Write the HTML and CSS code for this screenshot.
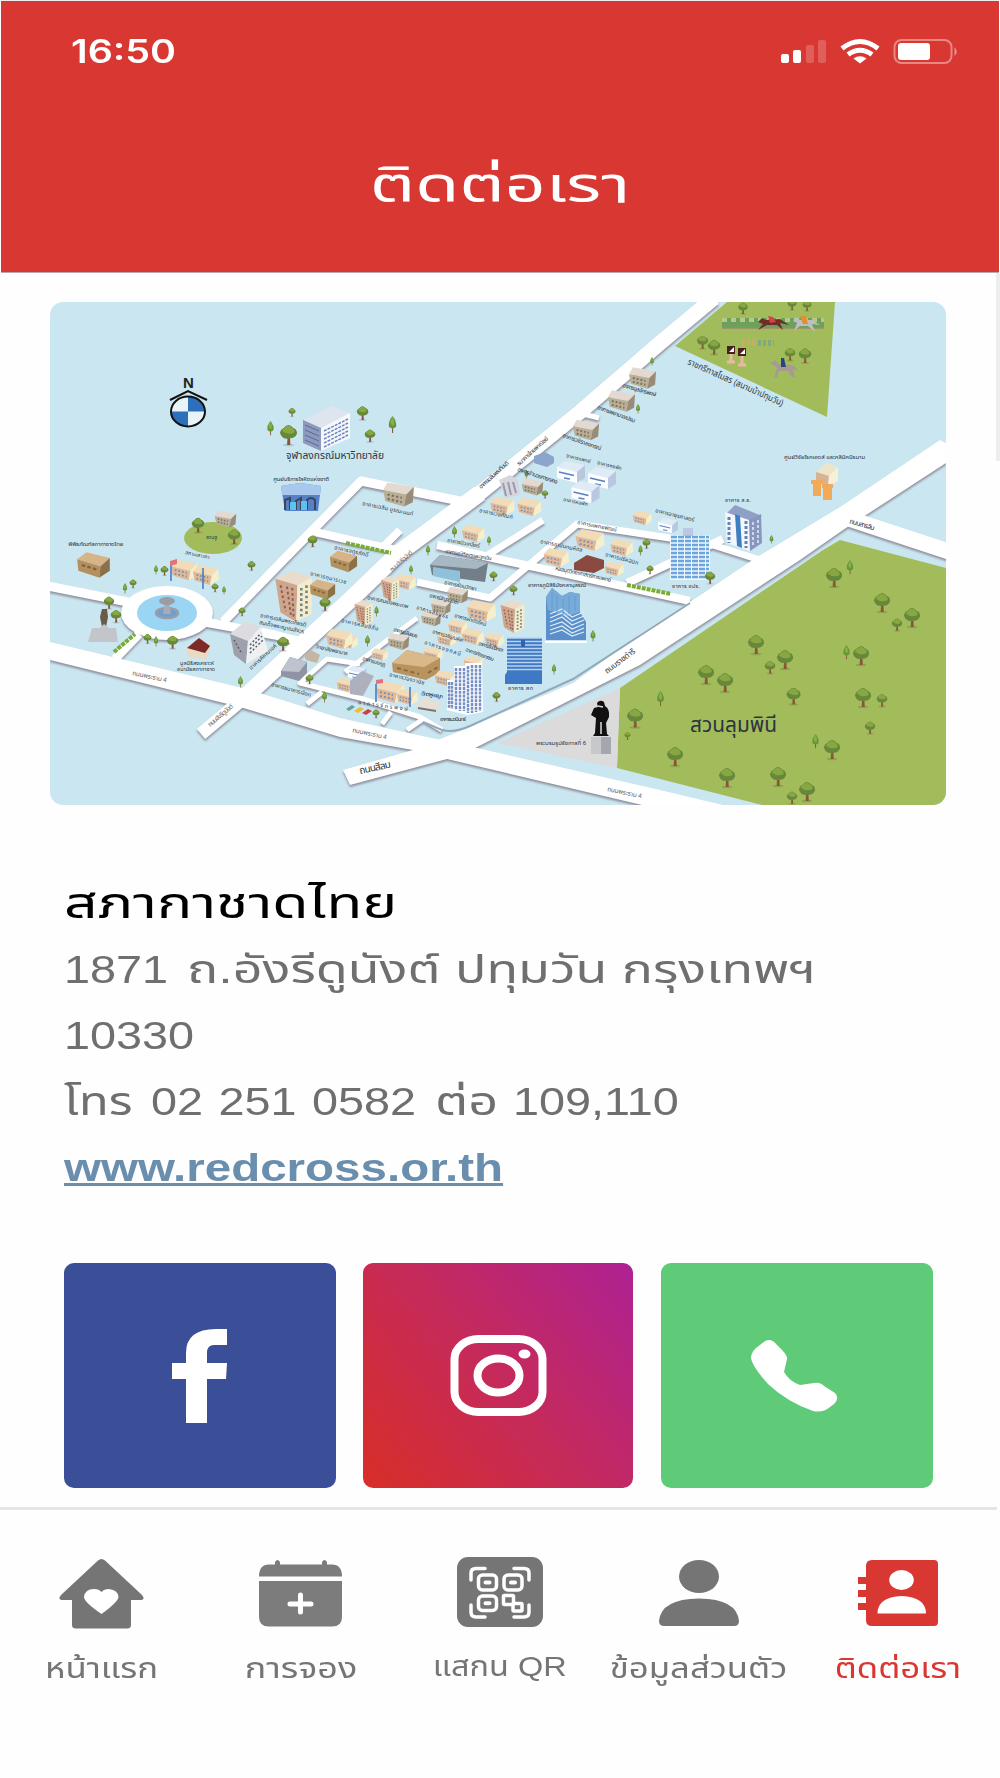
FILE: index.html
```html
<!DOCTYPE html>
<html lang="th">
<head>
  <meta charset="UTF-8">
  <meta name="viewport" content="width=device-width, initial-scale=1.0">
  <title>ติดต่อเรา</title>
  <link rel="stylesheet" href="styles.css">
</head>
<body>
  <header class="header">
    <div class="status-bar">
      <span class="time">16:50</span>
      <svg class="status-icons" width="178" height="28" viewBox="781 38 178 28">
        <g fill="#fff">
          <rect x="781" y="54" width="8" height="9" rx="2"/>
          <rect x="793" y="50" width="8" height="13" rx="2"/>
          <rect x="806" y="45" width="8" height="18" rx="2" opacity=".2"/>
          <rect x="818" y="40" width="8" height="23" rx="2" opacity=".2"/>
          <path d="M853.500 58.500Q860 54 866.500 58.500L860 63.500Z"/>
          <rect x="898" y="43" width="32" height="17" rx="3"/>
          <path d="M954.500 47Q959 51.500 954.500 56Z" opacity=".45"/>
        </g>
        <path d="M842 48.500Q860 34.500 878 48.500M848 54.500Q860 46 872 54.500" fill="none" stroke="#fff" stroke-width="5"/>
        <rect x="894.500" y="40" width="57" height="23" rx="7" fill="none" stroke="#fff" stroke-width="2" opacity=".4"/>
      </svg>
    </div>
    <h1 class="title"><span>ติดต่อเรา</span></h1>
  </header>

  <main class="content">
    <svg class="map" width="896" height="503" viewBox="50 302 896 503">
      <defs>
        <symbol id="tree" viewBox="0 0 20 24">
          <ellipse cx="10" cy="22" rx="6" ry="1.500" fill="#000" opacity=".12"/>
          <path d="M9 13h2.500l.5 9h-3.500z" fill="#8a5636"/>
          <path d="M1 9Q2 5 5 4Q10-2 15 4Q19 5 19 10Q17 15 12 15Q3 17 1 9Z" fill="#67883a"/>
          <path d="M3 7Q5 4 7 3Q10 0 14 4Q17 6 16 9Q9 12 3 7Z" fill="#87a743"/>
        </symbol>
        <symbol id="pine" viewBox="0 0 10 20">
          <path d="M4.500 13h1.200v6h-1.200z" fill="#8a5636"/>
          <path d="M5 0Q10 6 9 12Q5 16 1 12Q0 6 5 0Z" fill="#66943a"/>
          <path d="M5 1Q8 6 6 11Q2 10 3 5Z" fill="#86b048"/>
        </symbol>
        <symbol id="tan" viewBox="0 0 30 24">
          <path d="M1 8L7 1L29 5L22 13Z" fill="#f2dcb8"/>
          <path d="M1 8L22 13L20 23L3 18Z" fill="#e2b996"/>
          <path d="M22 13L29 5L30 17L20 23Z" fill="#f6efcb"/>
          <path d="M5 12l13 3M5 16l13 3" stroke="#7f91b5" stroke-width="2" stroke-dasharray="2 2"/>
        </symbol>
        <symbol id="taupe" viewBox="0 0 30 24">
          <path d="M1 8L5 1L29 5L22 12Z" fill="#e4d9d0"/>
          <path d="M1 8L22 12L20 23L3 18Z" fill="#b9ae96"/>
          <path d="M22 12L29 5L28 19L20 23Z" fill="#988c78"/>
          <path d="M5 12l13 3M5 16l13 3" stroke="#7b715f" stroke-width="2" stroke-dasharray="2 2"/>
        </symbol>
        <symbol id="brown" viewBox="0 0 30 24">
          <path d="M1 7L9 1L29 6L21 13Z" fill="#d6b488"/>
          <path d="M1 7L21 13L20 23L2 17Z" fill="#b3905f"/>
          <path d="M21 13L29 6L29 17L20 23Z" fill="#8c7047"/>
          <path d="M5 12l13 4" stroke="#846337" stroke-width="2" stroke-dasharray="3 2"/>
        </symbol>
        <symbol id="white" viewBox="0 0 30 24">
          <path d="M1 7L9 1L29 5L21 12Z" fill="#dfebf5"/>
          <path d="M1 7L21 12L21 23L1 18Z" fill="#fbfdff"/>
          <path d="M21 12L29 5L29 18L21 23Z" fill="#b9c8df"/>
          <path d="M3 12l15 3.500M8 18l6 1" stroke="#5b7fc0" stroke-width="1.500"/>
        </symbol>
        <symbol id="block" viewBox="0 0 30 40">
          <path d="M1 6L14 0L29 5L18 11Z" fill="#eadcc8"/>
          <path d="M1 6L18 11L17 39L5 32Z" fill="#cfa58c"/>
          <path d="M18 11L29 5L29 33L17 39Z" fill="#f5eccb"/>
          <path d="M5 11l4 20M10 12l3 22M14 13l1 22" stroke="#8b5f53" stroke-width="1.500" stroke-dasharray="2 2"/>
          <path d="M21 13v22M25 11v22" stroke="#71868a" stroke-width="2" stroke-dasharray="2 2"/>
        </symbol>
      </defs>

      <rect x="50" y="302" width="896" height="503" fill="#cae6f0"/>

      <!-- parks -->
      <g fill="#a2bc5c">
        <path d="M840 540L946 568V805H762L617 768L620 688L823 550Z"/>
        <path d="M727 302H835L827 417L675 346Z"/>
        <ellipse cx="213" cy="538" rx="29" ry="16"/>
      </g>
      <path d="M497 743L620 688L617 768Z" fill="#dbdbdb"/>

      <!-- roads -->
      <g class="roads">
        <path class="area" d="M50 642L247 689L340 718L473 747L660 790L723 805H642L447 759L413 750L340 737L240 707L50 660Z"/>
        <path class="area" d="M343 770L413 750L455 733L573 683L640 634L702 594L757 557L840 507L940 440L946 443V463L843 530L800 560L640 665L477 747L447 759L350 785Z"/>
        <path stroke-width="13" d="M201 734L250 693"/>
        <path stroke-width="17" d="M247 695L350 600L400 552L480 493"/>
        <path stroke-width="15" d="M475 497L580 412L660 343L714 298"/>
        <path stroke-width="16" d="M850 519L950 552"/>
        <path stroke-width="9" d="M48 586L128 602M205 622L275 635L310 644M139 634L115 659M223 622L293 550L361 481L465 502"/>
        <path stroke-width="8" d="M315 532L350 540L410 553M400 530L383 547M437 545L493 558L627 587L690 601M723 539L627 583"/>
        <path stroke-width="7" d="M543 520L488 555M760 560L710 544L577 524L490 598L417 582"/>
        <path stroke-width="5" d="M417 618L345 672M360 664L327 659L300 683L360 698L420 717L442 730M322 692L307 704M391 712L382 724M423 719L407 730M583 414L599 418"/>
        <ellipse class="area" cx="167" cy="613" rx="46" ry="27"/>
      </g>
      <path d="M423 722L442 730Q455 733 470 726L573 679L690 603" fill="none" stroke="#91a9ba" stroke-width="2"/>

      <!-- fountain -->
      <ellipse cx="167" cy="613" rx="30" ry="18" fill="#9bd5f4"/>
      <ellipse cx="167" cy="613" rx="11" ry="5" fill="#6f9fd0" stroke="#9a9da6" stroke-width="2.500"/>
      <path d="M165 602h4l2 12h-8z" fill="#a9abb3"/>
      <ellipse cx="167" cy="601" rx="8" ry="4" fill="#9a9da6"/>

      <!-- compass -->
      <text class="north" x="183" y="388">N</text>
      <path d="M170 400L188 391L207 400" fill="none" stroke="#111" stroke-width="2"/>
      <ellipse cx="188" cy="411.500" rx="17" ry="15" fill="#e8f4f8"/>
      <path d="M188 411.500V396.500A17 15 0 0 1 205 411.500ZM188 411.500V426.500A17 15 0 0 1 171 411.500Z" fill="#2c6fbb"/>
      <ellipse cx="188" cy="411.500" rx="17" ry="15" fill="none" stroke="#111" stroke-width="2"/>

      <!-- chulalongkorn -->
      <path d="M303 420L332 406L350 413L321 428Z" fill="#dfe5ee"/>
      <path d="M303 420L321 428V451L303 443Z" fill="#8d99bd"/>
      <path d="M321 428L350 413V438L321 451Z" fill="#f6f8fc"/>
      <path d="M324 431L348 419M324 435L348 423M324 439L348 427M324 443L348 431M324 447L348 435" stroke="#7189bd" stroke-width="1.500" stroke-dasharray="3 1"/>
      <path d="M305 425l14 6M305 430l14 6M305 435l14 6M305 440l14 6" stroke="#5a6c9c" stroke-width="1"/>

      <!-- blood centre -->
      <path d="M281 486L300 483L321 486L318 511H285Z" fill="#5681c9"/>
      <path d="M281 486L300 483L321 486L320 495H282Z" fill="#a9c8ee"/>
      <path d="M285 510V500l5-2v12M296 510v-9l5-3v12M307 510v-10q4-4 8 0v10" fill="none" stroke="#3a4758" stroke-width="2"/>
      <path d="M290 502h6v8h-6zM301 501h6v9h-6z" fill="#5fc2ee"/>

      <!-- race course -->
      <path d="M722 318H824V328H722Z" fill="#6ca05b"/>
      <path d="M722 320H824" stroke="#b4c98a" stroke-width="4" stroke-dasharray="5 4"/>
      <path d="M722 328H824" stroke="#9a8b6c" stroke-width="1.500"/>
      <path d="M742 342H757" stroke="#c6ae66" stroke-width="6" stroke-dasharray="3 2"/>
      <path d="M758 343H774" stroke="#7fa982" stroke-width="6" stroke-dasharray="3 2"/>
      <path d="M731 352v10M742 355v10M727 362h8M738 365h8" stroke="#ecb8a2" stroke-width="3"/>
      <path d="M727 346h8v8h-8zM738 348h8v8h-8z" fill="#4b1f1c"/>
      <path d="M729 352l5-5v5zM740 354l5-5v5z" fill="#fff"/>
      <path d="M758 322L762 318L766 320L780 319L789 325L780 323L783 330L777 325L767 325L758 330L763 324Z" fill="#6d2e25"/>
      <path d="M768 316l5 1 3 5-6 1z" fill="#d64242"/>
      <path d="M793 320L797 317L800 320L812 320L820 325L812 324L815 332L808 326L800 326L794 331L797 323Z" fill="#bcbfc2"/>
      <path d="M800 316l6 0 2 8-5 0z" fill="#e68b2f"/>
      <path d="M770 364L775 360L779 364L791 365L795 367L799 371L793 369L795 378L792 377L788 371L779 371L777 378L774 377L777 368L774 365Z" fill="#a59b94"/>
      <path d="M781 358h3l2 9h-5z" fill="#2b4478"/>

      <!-- research clinic -->
      <path d="M816 472L827 463L838 467L829 476Z" fill="#eee5c9"/>
      <path d="M816 472L829 476L828 486L816 482Z" fill="#d7b294"/>
      <path d="M829 476L838 467V481L828 486Z" fill="#f6f0d4"/>
      <path d="M811 480h12v4h-2v12h-8v-12h-2zM822 484h11v4h-1v12h-9v-12h-1z" fill="#f1a95a"/>

      <!-- museum, station, chapel -->
      <use href="#brown" x="76" y="548" width="35" height="34"/>
      <use href="#taupe" x="214" y="509" width="23" height="20"/>
      <use href="#tan" x="170" y="557" width="28" height="26"/>
      <use href="#tan" x="192" y="563" width="27" height="24"/>
      <path d="M171 561v20M203 568v21" stroke="#3c77c4" stroke-width="1.500"/>
      <path d="M170 561l7-2v5l-7 2z" fill="#e07278"/>
      <path d="M186 648L200 638L211 646L206 659L188 657Z" fill="#eadac2"/>
      <path d="M187 648L199 638L210 646L205 653Z" fill="#7d2b28"/>
      <path d="M102 609h5l1 8-2 10h-4l-2-10z" fill="#6a5d48"/>
      <path d="M88 642l4-14h8l4-4 5 4h7l2 14z" fill="#c3c5cb"/>

      <!-- city blocks -->
      <use href="#block" x="269" y="571" width="49" height="52"/>
      <use href="#brown" x="309" y="577" width="27" height="25"/>
      <use href="#brown" x="329" y="549" width="29" height="25"/>
      <path d="M230 634L245 621L261 627L248 641Z" fill="#dcdce0"/>
      <path d="M230 634L248 641L246 664L234 655Z" fill="#9ea0ac"/>
      <path d="M248 641L261 627L268 651L246 664Z" fill="#eff0f2"/>
      <path d="M250 645l11-12M250 649l12-13M250 653l13-13M234 640l8 14" stroke="#5b5f6b" stroke-width="1.500" stroke-dasharray="2 2"/>
      <use href="#taupe" x="382" y="481" width="33" height="27"/>
      <use href="#taupe" x="628" y="366" width="29" height="24"/>
      <use href="#taupe" x="607" y="389" width="29" height="24"/>
      <use href="#taupe" x="572" y="418" width="28" height="24"/>
      <path d="M534 456L545 452L554 457V463L547 467L534 463Z" fill="#8ba5cb"/>
      <use href="#white" x="554" y="460" width="34" height="24"/>
      <use href="#white" x="585" y="466" width="34" height="24"/>
      <use href="#white" x="568" y="480" width="35" height="24"/>
      <path d="M499 480L510 475L518 480L520 495L505 498Z" fill="#d7d6df"/>
      <path d="M503 483l3 13M508 482l3 13M513 482l3 11" stroke="#9a9bac" stroke-width="2"/>
      <use href="#taupe" x="521" y="477" width="23" height="20"/>
      <use href="#tan" x="489" y="496" width="26" height="20"/>
      <use href="#tan" x="516" y="497" width="26" height="20"/>
      <use href="#tan" x="459" y="524" width="28" height="19"/>
      <use href="#tan" x="572" y="528" width="35" height="24"/>
      <use href="#tan" x="607" y="538" width="29" height="19"/>
      <use href="#tan" x="540" y="547" width="32" height="21"/>
      <path d="M574 563L587 555L604 560V568L594 573L574 570Z" fill="#8a4a3f"/>
      <use href="#tan" x="604" y="558" width="20" height="22"/>
      <use href="#tan" x="632" y="507" width="20" height="22"/>
      <use href="#white" x="656" y="517" width="24" height="17"/>
      <path d="M430 565L440 555L488 563L485 582L432 575Z" fill="#727f89"/>
      <path d="M430 565L440 555L488 563L476 569Z" fill="#a7b8c2"/>
      <path d="M433 567l27 4v11l-27-6z" fill="#8fc1da"/>

      <use href="#tan" x="394" y="573" width="22" height="18"/>
      <use href="#block" x="377" y="576" width="26" height="26"/>
      <use href="#block" x="351" y="600" width="25" height="26"/>
      <use href="#taupe" x="446" y="586" width="23" height="18"/>
      <use href="#taupe" x="429" y="598" width="24" height="17"/>
      <use href="#taupe" x="419" y="610" width="24" height="17"/>
      <use href="#tan" x="463" y="599" width="36" height="24"/>
      <use href="#block" x="498" y="600" width="29" height="34"/>
      <use href="#tan" x="446" y="619" width="23" height="16"/>
      <use href="#tan" x="435" y="631" width="23" height="16"/>
      <use href="#tan" x="461" y="627" width="23" height="19"/>
      <use href="#tan" x="483" y="632" width="22" height="16"/>
      <use href="#taupe" x="387" y="632" width="23" height="19"/>
      <use href="#tan" x="338" y="632" width="20" height="19"/>
      <use href="#tan" x="320" y="628" width="38" height="22"/>
      <use href="#tan" x="371" y="647" width="17" height="15"/>
      <use href="#tan" x="421" y="646" width="24" height="16"/>
      <path d="M392 663L407 650L440 658V672L426 680L393 672Z" fill="#b8935f"/>
      <path d="M392 663L407 650L440 658L424 667Z" fill="#dab988"/>
      <path d="M397 668l22 6M428 673l10-6" stroke="#8b693a" stroke-width="2" stroke-dasharray="4 3"/>
      <use href="#tan" x="461" y="655" width="24" height="16"/>
      <use href="#tan" x="434" y="669" width="22" height="19"/>

      <path d="M281 671L290 657L307 662L307 673L299 681L281 676Z" fill="#8f93a5"/>
      <path d="M281 671L290 657L307 662L299 672Z" fill="#bfc3cf"/>
      <path d="M304 655L311 650L320 655L317 663L306 660Z" fill="#c5b6a4"/>
      <use href="#white" x="346" y="665" width="22" height="16"/>
      <use href="#tan" x="335" y="677" width="22" height="16"/>
      <path d="M350 681L362 671L374 676L363 696L350 694Z" fill="#aeb1bd"/>
      <use href="#tan" x="375" y="680" width="30" height="24"/>
      <use href="#tan" x="396" y="686" width="22" height="22"/>
      <path d="M376 684v18M410 687v20" stroke="#3c77c4" stroke-width="1.500"/>
      <path d="M376 680l7-1v4l-7 1z" fill="#e07278"/>
      <path d="M416 705L424 697L440 703L437 713L418 709Z" fill="#e6dfd5"/>
      <path d="M418 708l18 3" stroke="#777" stroke-width="2"/>
      <path d="M354 711l6-4 4 2-6 4z" fill="#f0bd2c"/>
      <path d="M362 713l6-4 4 2-6 4z" fill="#c94343"/>
      <path d="M346 709l6-4 3 2-6 4z" fill="#6aa09a"/>

      <!-- towers -->
      <path d="M670 535h40v45h-40z" fill="#eef6fd"/>
      <path d="M683 528h10v8h-10z" fill="#bcc7e6"/>
      <path d="M671 537H709M671 541H709M671 545H709M671 549H709M671 553H709M671 557H709M671 561H709M671 565H709M671 569H709M671 573H709M671 577H709" stroke="#6aa5dc" stroke-width="2.500" stroke-dasharray="6 1"/>
      <path d="M725 515L735 505L762 516L749 521Z" fill="#8f9fc6"/>
      <path d="M725 512L749 520L750 551L727 543Z" fill="#f3f7fc"/>
      <path d="M749 520L761 514L762 543L750 551Z" fill="#8797bf"/>
      <path d="M735 514L740 516L742 548L737 546Z" fill="#3e7fc3"/>
      <path d="M729 517v26M746 521v27" stroke="#6082bc" stroke-width="3" stroke-dasharray="3 2"/>
      <path d="M753 522v24M758 520v23" stroke="#e9edf6" stroke-width="1.500" stroke-dasharray="3 2"/>
      <path d="M546 597L552 588L562 596L570 592L580 594V612L586 622V640H546Z" fill="#5b8fc9"/>
      <path d="M546 597L552 588L562 596L570 592L580 594V612L566 617L548 610Z" fill="#79abd9"/>
      <path d="M550 614L562 609L572 617L584 612M550 618L562 613L572 621L584 616M550 622L562 617L572 625L584 620M550 626L562 622L572 629L584 624M550 630L562 626L572 633L584 628M550 634L562 630L572 636L584 632" fill="none" stroke="#dcecf8" stroke-width="1.300"/>
      <path d="M552 592v20M557 595v18M563 599v17M569 596v18M575 596v15" stroke="#639ad0" stroke-width="1"/>
      <path d="M545 642h42" stroke="#fff" stroke-width="2"/>
      <path d="M507 638H542V684H505V675L507 672Z" fill="#3f78c4"/>
      <path d="M507 638h35M507 641.500h35M507 645h35M507 648.500h35M507 652h35M507 655.500h35M507 659h35M507 662.500h35M507 666h35M507 669.500h35" stroke="#b9d4ef" stroke-width="1.500"/>
      <path d="M521 640h4v7h-4z" fill="#2d63b2"/>
      <path d="M447 680h7v-14h11v-3h17l1 49-16 3-20-5z" fill="#fff"/>
      <path d="M449 682v26M452 682v27M456 668v42M460 668v43M464 668v43M468 666v47M472 665v48M476 665v47M480 665v46" stroke="#7790c4" stroke-width="2.500" stroke-dasharray="3 .8"/>

      <!-- monument -->
      <path d="M591 737h20v17h-20z" fill="#c6c8cc"/>
      <path d="M601 737h10v17h-10z" fill="#a4a7ad"/>
      <path d="M597 703q3-4 7-1l1 4q5 3 4 11l-3 6 1 11 2 2h-16l2-3 1-15-5-3 3-7 4-1z" fill="#111"/>
      <path d="M601 722v12M598 706l5 1" stroke="#dbdbdb" stroke-width="1.500"/>

      <!-- hedges -->
      <g stroke="#78ad35" stroke-width="4" stroke-dasharray="4 1">
        <path d="M346 543L391 553M627 585L671 594M114 652L135 634"/>
      </g>

      <!-- trees -->
      <use href="#tree" x="279" y="424" width="19" height="23"/>
      <use href="#pine" x="266" y="421" width="9" height="15"/>
      <use href="#tree" x="288" y="407" width="8" height="11"/>
      <use href="#tree" x="356" y="403" width="13" height="21"/>
      <use href="#pine" x="388" y="416" width="9" height="18"/>
      <use href="#tree" x="364" y="428" width="12" height="16"/>
      <use href="#tree" x="191" y="517" width="14" height="17"/>
      <use href="#tree" x="227" y="528" width="14" height="18"/>
      <use href="#tree" x="307" y="534" width="11" height="15"/>
      <use href="#tree" x="103" y="596" width="12" height="14"/>
      <use href="#tree" x="110" y="609" width="12" height="15"/>
      <use href="#pine" x="121" y="583" width="8" height="11"/>
      <use href="#tree" x="129" y="578" width="8" height="12"/>
      <use href="#pine" x="153" y="565" width="6" height="10"/>
      <use href="#tree" x="160" y="565" width="9" height="12"/>
      <use href="#tree" x="211" y="582" width="8" height="12"/>
      <use href="#pine" x="221" y="586" width="6" height="9"/>
      <use href="#tree" x="247" y="560" width="9" height="12"/>
      <use href="#tree" x="238" y="606" width="8" height="12"/>
      <use href="#tree" x="143" y="633" width="9" height="12"/>
      <use href="#tree" x="166" y="635" width="13" height="15"/>
      <use href="#pine" x="153" y="636" width="6" height="11"/>
      <use href="#tree" x="276" y="636" width="14" height="16"/>
      <use href="#tree" x="318" y="597" width="14" height="15"/>
      <use href="#pine" x="237" y="676" width="7" height="12"/>
      <use href="#pine" x="321" y="691" width="7" height="12"/>
      <use href="#tree" x="305" y="674" width="9" height="11"/>
      <use href="#pine" x="649" y="357" width="6" height="9"/>
      <use href="#pine" x="634" y="404" width="8" height="10"/>
      <use href="#pine" x="523" y="470" width="7" height="9"/>
      <use href="#tree" x="541" y="490" width="8" height="9"/>
      <use href="#pine" x="451" y="526" width="7" height="12"/>
      <use href="#pine" x="486" y="536" width="6" height="10"/>
      <use href="#pine" x="425" y="545" width="6" height="11"/>
      <use href="#tree" x="642" y="538" width="9" height="12"/>
      <use href="#pine" x="637" y="545" width="7" height="11"/>
      <use href="#tree" x="704" y="571" width="12" height="14"/>
      <use href="#tree" x="646" y="565" width="8" height="10"/>
      <use href="#pine" x="768" y="535" width="7" height="9"/>
      <use href="#tree" x="489" y="571" width="9" height="11"/>
      <use href="#tree" x="509" y="585" width="9" height="11"/>
      <use href="#pine" x="407" y="565" width="8" height="10"/>
      <use href="#pine" x="373" y="606" width="7" height="11"/>
      <use href="#pine" x="364" y="635" width="7" height="12"/>
      <use href="#pine" x="590" y="630" width="6" height="12"/>
      <use href="#pine" x="551" y="664" width="6" height="11"/>
      <use href="#tree" x="492" y="691" width="9" height="12"/>
      <use href="#tree" x="372" y="709" width="8" height="10"/>

      <use href="#tree" x="737" y="302" width="12" height="13"/>
      <use href="#tree" x="784" y="299" width="16" height="12"/>
      <use href="#tree" x="800" y="300" width="14" height="12"/>
      <use href="#tree" x="696" y="335" width="13" height="15"/>
      <use href="#tree" x="707" y="339" width="14" height="17"/>
      <use href="#tree" x="784" y="347" width="12" height="15"/>
      <use href="#tree" x="798" y="347" width="14" height="18"/>

      <use href="#tree" x="825" y="566" width="18" height="24"/>
      <use href="#pine" x="845" y="560" width="10" height="15"/>
      <use href="#tree" x="873" y="591" width="18" height="24"/>
      <use href="#tree" x="903" y="606" width="18" height="24"/>
      <use href="#tree" x="891" y="618" width="12" height="14"/>
      <use href="#tree" x="747" y="633" width="18" height="24"/>
      <use href="#tree" x="776" y="648" width="18" height="24"/>
      <use href="#tree" x="764" y="660" width="12" height="15"/>
      <use href="#tree" x="852" y="644" width="18" height="24"/>
      <use href="#pine" x="842" y="645" width="9" height="15"/>
      <use href="#tree" x="697" y="663" width="18" height="24"/>
      <use href="#tree" x="716" y="671" width="18" height="24"/>
      <use href="#pine" x="656" y="691" width="9" height="16"/>
      <use href="#tree" x="785" y="687" width="17" height="19"/>
      <use href="#tree" x="854" y="686" width="18" height="24"/>
      <use href="#tree" x="876" y="693" width="12" height="15"/>
      <use href="#tree" x="864" y="721" width="12" height="14"/>
      <use href="#tree" x="823" y="738" width="18" height="24"/>
      <use href="#pine" x="811" y="734" width="9" height="15"/>
      <use href="#tree" x="626" y="707" width="18" height="23"/>
      <use href="#tree" x="624" y="730" width="7" height="12"/>
      <use href="#tree" x="666" y="745" width="18" height="24"/>
      <use href="#tree" x="718" y="766" width="18" height="24"/>
      <use href="#tree" x="769" y="765" width="18" height="24"/>
      <use href="#tree" x="798" y="780" width="18" height="24"/>
      <use href="#tree" x="786" y="791" width="12" height="14"/>

      <!-- labels -->
      <g class="labels">
        <text x="690" y="732" font-size="21" textLength="87" lengthAdjust="spacingAndGlyphs">สวนลุมพินี</text>
        <text x="286" y="459" font-size="10" textLength="98" lengthAdjust="spacingAndGlyphs">จุฬาลงกรณ์มหาวิทยาลัย</text>
        <text x="273" y="481" font-size="6" textLength="56">ศูนย์บริการโลหิตแห่งชาติ</text>
        <text x="68" y="546" font-size="6" textLength="55">พิพิธภัณฑ์สภากาชาดไทย</text>
        <text x="206" y="539" font-size="5">สวนงู</text>
        <text transform="translate(185 554) rotate(12)" font-size="5">สถานเสาวภา</text>
        <text transform="translate(687 364) rotate(24)" font-size="9" textLength="104" lengthAdjust="spacingAndGlyphs">ราชกรีฑาสโมสร (สนามม้าปทุมวัน)</text>
        <text x="784" y="459" font-size="6" textLength="81">ศูนย์วิจัยโรคเอดส์ และคลินิคนิรนาม</text>
        <text x="725" y="502" font-size="5.500" textLength="26">อาคาร ส.ธ.</text>
        <text x="672" y="588" font-size="5.500" textLength="28">อาคาร อปร.</text>
        <text x="528" y="587" font-size="6" textLength="58">อาคารภูมิสิริมังคลานุสรณ์</text>
        <text x="508" y="690" font-size="6" textLength="25">อาคาร สก</text>
        <text x="440" y="721" font-size="6" textLength="26">อาคารนวมินทร์</text>
        <text x="536" y="745" font-size="6" textLength="50">พระบรมรูปรัชกาลที่ 6</text>
        <text transform="translate(360 774) rotate(-12)" font-size="10" textLength="32">ถนนสีลม</text>
        <text transform="translate(607 674) rotate(-37)" font-size="8" textLength="36">ถนนราชดำริ</text>
        <text transform="translate(849 523) rotate(17)" font-size="7" textLength="26">ถนนสารสิน</text>
        <text class="road" transform="translate(132 675) rotate(12)" font-size="6.500" textLength="35">ถนนพระราม 4</text>
        <text class="road" transform="translate(352 732) rotate(12)" font-size="6.500" textLength="35">ถนนพระราม 4</text>
        <text class="road" transform="translate(607 791) rotate(12)" font-size="6.500" textLength="35">ถนนพระราม 4</text>
        <text class="road" transform="translate(210 727) rotate(-40)" font-size="6.500" textLength="31">ถนนอังรีดูนังต์</text>
        <text class="road" transform="translate(392 572) rotate(-42)" font-size="6" textLength="28">ถนนอังรีดูนังต์</text>
        <text transform="translate(481 489) rotate(-42)" font-size="6" textLength="38">อาคารเฉลิมพระเกียรติ</text>
        <text transform="translate(519 466) rotate(-42)" font-size="6" textLength="40">ธนาคารไทยพาณิชย์</text>
        <text transform="translate(622 387) rotate(16)" font-size="6" textLength="35">อาคารจุลจักรพงษ์</text>
        <text transform="translate(597 409) rotate(20)" font-size="6" textLength="40">อาคารพยาบาลเปรม</text>
        <text transform="translate(562 437) rotate(19)" font-size="6" textLength="41">อาคารวชิราลงกรณ์</text>
        <text transform="translate(517 471) rotate(18)" font-size="6" textLength="42">อาคารอำนวยการกลาง</text>
        <text transform="translate(566 457) rotate(14)" font-size="5" textLength="25">อาคารแพทย์</text>
        <text transform="translate(597 464) rotate(14)" font-size="5" textLength="25">อาคารหอพัก</text>
        <text transform="translate(563 501) rotate(12)" font-size="5" textLength="25">อาคารหอพัก</text>
        <text transform="translate(362 505) rotate(12)" font-size="5.500" textLength="52">อาคารเฉลิม บูรณะนนท์</text>
        <text transform="translate(479 512) rotate(12)" font-size="5.500" textLength="34">อาคารเวชภัณฑ์</text>
        <text transform="translate(447 542) rotate(10)" font-size="5.500" textLength="33">อาคารนิวเคลียร์</text>
        <text transform="translate(445 553) rotate(9)" font-size="5.500" textLength="47">อาคารอุบัติเหตุและฉุกเฉิน</text>
        <text transform="translate(577 524) rotate(11)" font-size="5.500" textLength="40">อาคารแพทยพัฒน์</text>
        <text transform="translate(540 543) rotate(12)" font-size="5.500" textLength="43">อาคารอานันทมหิดล</text>
        <text transform="translate(555 570) rotate(12)" font-size="5.500" textLength="57">หอสมุดวิทยาศาสตร์การแพทย์</text>
        <text transform="translate(605 556) rotate(15)" font-size="5.500" textLength="34">อาคารปรีคลินิก</text>
        <text transform="translate(655 512) rotate(14)" font-size="5.500" textLength="40">อาคารอายุรศาสตร์</text>
        <text transform="translate(334 549) rotate(13)" font-size="5.500" textLength="35">อาคารจตุรภักดิ์</text>
        <text transform="translate(310 575) rotate(14)" font-size="5.500" textLength="37">อาคารกุมารเวช</text>
        <text transform="translate(260 617) rotate(12)" font-size="5.500" textLength="47">อาคารเฉลิมพระเกียรติ</text>
        <text transform="translate(259 624) rotate(12)" font-size="5.500" textLength="46">สมเด็จพระญาณสังวร</text>
        <text x="180" y="665" font-size="5.500" textLength="34">มูลนิธิสงเคราะห์</text>
        <text x="177" y="671" font-size="5.500" textLength="38">อนามัยสภากาชาด</text>
        <text transform="translate(251 670) rotate(-42)" font-size="5.500" textLength="35">อาคารคัคณางค์</text>
        <text transform="translate(271 686) rotate(15)" font-size="5.500" textLength="41">อาคารธนาคารเลือด</text>
        <text transform="translate(315 648) rotate(13)" font-size="5.500" textLength="33">วิทยาลัยพยาบาล</text>
        <text transform="translate(367 599) rotate(13)" font-size="5.500" textLength="42">อาคารสมเด็จพระเทพ</text>
        <text transform="translate(341 622) rotate(13)" font-size="5.500" textLength="38">อาคารหลิ่มซีลั่น</text>
        <text transform="translate(429 597) rotate(14)" font-size="5.500" textLength="30">อาคารปัญจมราชา</text>
        <text transform="translate(416 609) rotate(17)" font-size="5.500" textLength="33">อาคารสิรินธร</text>
        <text transform="translate(444 584) rotate(12)" font-size="5.500" textLength="33">อาคารรัตนวิทยา</text>
        <text transform="translate(454 617) rotate(16)" font-size="5.500" textLength="33">อาคารผ่าตัดใหม่</text>
        <text transform="translate(432 633) rotate(17)" font-size="5.500" textLength="32">อาคารวชิรุณหิศ</text>
        <text transform="translate(478 645) rotate(16)" font-size="5.500" textLength="26">อาคารรังสีวิทยา</text>
        <text transform="translate(424 644) rotate(18)" font-size="5.500" textLength="38">อาคารจงกลนี</text>
        <text transform="translate(465 651) rotate(20)" font-size="5.500" textLength="30">อาคารศัลยกรรม</text>
        <text transform="translate(389 676) rotate(14)" font-size="5.500" textLength="36">อาคารว่องวานิช</text>
        <text transform="translate(393 631) rotate(16)" font-size="5.500" textLength="25">อาคารเอลิสะเบธ</text>
        <text transform="translate(362 660) rotate(16)" font-size="5.500" textLength="24">อาคารมงกุฎ</text>
        <text transform="translate(358 704) rotate(8)" font-size="5.500" textLength="50">อาคารจักรพงษ์</text>
        <text transform="translate(420 695) rotate(8)" font-size="5.500" textLength="22">ตึกตาหูคอจมูก</text>
      </g>
    </svg>

    <section class="address">
      <h2><span>สภากาชาดไทย</span></h2>
      <p><span class="num house-no">1871</span> <span class="street">ถ.อังรีดูนังต์ ปทุมวัน กรุงเทพฯ</span></p>
      <p><span class="num">10330</span></p>
      <p><span class="tel">โทร</span> <span class="num tel-no">02 251 0582</span> <span class="ext">ต่อ</span> <span class="num">109,110</span></p>
      <p><a href="#">www.redcross.or.th</a></p>
    </section>

    <div class="channels">
      <a class="channel facebook" href="#">
        <svg width="56" height="94" viewBox="0 0 56 94"><path fill="#fff" d="M35 94V50H54L55 34H35V24Q35 16 42 16H55V0H44Q14 0 14 24V34H0V50H14V94Z"/></svg>
      </a>
      <a class="channel instagram" href="#">
        <svg width="97" height="81" viewBox="0 0 97 81" fill="none" stroke="#fff" stroke-width="8">
          <rect x="4.500" y="4" width="88" height="73" rx="24" ry="20"/>
          <ellipse cx="48.500" cy="40.500" rx="21" ry="17"/>
          <ellipse cx="74.500" cy="19" rx="6" ry="4.500" fill="#fff" stroke="none"/>
        </svg>
      </a>
      <a class="channel phone" href="#">
        <svg width="87" height="72" viewBox="0 0 87 72"><path fill="#fff" d="M18 0Q22 0 26 5Q37 15 36 19L33 32Q38 41 49 45L63 43Q69 42 73 46L84 53Q89 58 83 64L79 67Q72 73 62 71Q36 62 17 44Q0 25 0 17Q1 10 9 5Q14 0 18 0Z"/></svg>
      </a>
    </div>
    <div class="scrollbar"></div>
  </main>

  <nav class="tabs">
    <a class="tab" href="#">
      <svg width="85" height="70" viewBox="0 0 85 70">
        <path fill="#757575" d="M39 1.500Q42.500-1.500 46 1.500L83 36Q87 41 81 41H72V66Q72 69.500 68 69.500H17Q13 69.500 13 66V41H4Q-2 41 2 36Z"/>
        <path fill="#fff" d="M42.500 55Q25 43 25 38Q26 30 35 30Q40 30 42.500 33Q45 30 50 30Q59 31 59.500 38Q59 43 42.500 55Z"/>
      </svg>
      <span>หน้าแรก</span>
    </a>
    <a class="tab" href="#">
      <svg width="83" height="70" viewBox="0 -1 83 70">
        <path fill="#7c7c7c" d="M0 16.500Q0 4.500 10 4.500H16V2Q18.500-2 21 2V4.500H63V2Q65.500-2 68 2V4.500H73Q83 4.500 83 16.500ZM0 21H83V57Q83 66.500 73 66.500H10Q0 66.500 0 57Z"/>
        <path stroke="#fff" stroke-width="5" stroke-linecap="round" d="M31 44H52M41.500 35V52"/>
      </svg>
      <span class="label-booking">การจอง</span>
    </a>
    <a class="tab tab-qr" href="#">
      <svg width="86" height="70" viewBox="0 0 86 70" fill="none" stroke="#fff" stroke-width="3.500">
        <rect width="86" height="70" rx="11" fill="#757575" stroke="none"/>
        <g stroke-linecap="round">
          <path d="M14 23V16Q14 11.500 19 11.500H28M57 11.500H67Q72 11.500 72 16V23M14 48V55Q14 60 19 60H28M57 60H67Q72 60 72 55V48"/>
        </g>
        <rect x="21.500" y="18" width="18" height="15" rx="4"/>
        <rect x="47" y="18" width="18" height="15" rx="4"/>
        <rect x="21.500" y="39" width="18" height="14.500" rx="4"/>
        <rect x="46.500" y="38.500" width="10" height="9" rx="1"/>
        <rect x="56" y="46.500" width="9" height="7.500" rx="1"/>
        <path d="M28.500 25.500h4M54 25.500h4M28.500 46.300h4" stroke-width="4" stroke-linecap="round"/>
      </svg>
      <span class="label-qr">แสกน QR</span>
    </a>
    <a class="tab" href="#">
      <svg width="80" height="70" viewBox="0 -1 80 70" fill="#757575">
        <ellipse cx="40" cy="16.500" rx="20" ry="16.500"/>
        <path d="M0 61Q2 39 40 38.500Q78 39 80 61Q80 66 75 66H5Q0 66 0 61Z"/>
      </svg>
      <span>ข้อมูลส่วนตัว</span>
    </a>
    <a class="tab active" href="#">
      <svg width="80" height="70" viewBox="0 -1 80 70" fill="#d93732">
        <path d="M14 0H76Q80 0 80 4V62Q80 66 76 66H14Q8 66 8 60V50H0V43H8V37H0V30H8V24H0V17H8V6Q8 0 14 0Z"/>
        <ellipse cx="43.500" cy="20" rx="12.300" ry="10" fill="#fff"/>
        <path d="M19.500 53.500Q19.500 37 43.500 36Q68 37 68 53.500Z" fill="#fff"/>
      </svg>
      <span>ติดต่อเรา</span>
    </a>
  </nav>
</body>
</html>
```
FILE: styles.css
```css
* {
  box-sizing: border-box;
}
body {
  margin: 0;
  height: 1778px;
  display: flex;
  flex-direction: column;
  font-family: "Liberation Sans", "Noto Sans Thai", "Prompt", "Noto Sans", sans-serif;
  background: #fefefe;
  color: #6f6f6f;
  overflow: hidden;
}
a {
  text-decoration: none;
}
span, .address a {
  display: inline-block;
  white-space: nowrap;
}
.header {
  height: 273px;
  margin: 0 1px;
  border-top: 1px solid #eee;
  border-bottom: 1px solid #b9a9a8;
  background: #d93732;
  color: #fff;
}
.status-bar {
  display: flex;
  justify-content: space-between;
  padding: 37px 40px 0 70px;
  height: 74px;
}
.time {
  font-family: Inter, "Liberation Sans", sans-serif;
  font-size: 32px;
  line-height: 28px;
  font-weight: 600;
  transform: scaleX(1.23);
  transform-origin: left;
}
.title {
  margin: 0;
  padding-top: 70px;
  text-align: center;
  font-size: 50px;
  line-height: 80px;
  font-weight: normal;
}
.title span {
  transform: scaleX(1.43);
}
.content {
  position: relative;
  height: 1234px;
  padding: 29px 0 0 50px;
}
.map {
  display: block;
  border-radius: 13px;
}
.roads {
  fill: none;
  stroke: #fff;
  stroke-linejoin: round;
  filter: drop-shadow(0 2px 1px #8d8d9b);
}
.roads .area {
  fill: #fff;
  stroke: none;
}
.north {
  font-size: 15px;
  font-weight: bold;
  fill: #222;
}
.labels {
  fill: #2b3440;
}
.labels .road {
  fill: #666;
}
.address {
  padding: 66px 0 0 14px;
}
.address h2,
.address p {
  margin: 0;
  height: 66px;
  line-height: 66px;
  font-size: 39px;
  font-weight: normal;
  white-space: nowrap;
}
.address span,
.address a {
  transform-origin: left;
}
.address h2 {
  color: #000;
  font-size: 42px;
}
.address h2 span {
  transform: scaleX(1.4);
}
.address a {
  color: #6a8fae;
  font-weight: bold;
  text-decoration: underline;
  transform: scaleX(1.218);
}
.num {
  word-spacing: 2px;
  transform: scaleX(1.2);
}
.house-no {
  margin-right: 25px;
}
.street {
  transform: scaleX(1.332);
}
.tel {
  margin-right: 21px;
  transform: scaleX(1.25);
}
.tel-no {
  margin-right: 53px;
}
.ext {
  margin-right: 20px;
  transform: scaleX(1.34);
}
.channels {
  display: grid;
  grid-template-columns: 272px 270px 272px;
  gap: 27.5px;
  padding: 62px 0 0 13.5px;
}
.channel {
  height: 225px;
  display: flex;
  align-items: center;
  justify-content: center;
  border-radius: 10px;
}
.facebook {
  background: #3a4f98;
}
.instagram {
  background: linear-gradient(51deg, #d82e27, #c52a5b 50%, #ae2193);
}
.phone {
  padding-right: 4px;
  background: #5fcb79;
}
.scrollbar {
  position: absolute;
  top: 0;
  right: 0;
  width: 4px;
  height: 188px;
  background: #ededed;
}
.tabs {
  display: grid;
  grid-template-columns: repeat(5, 199px);
  width: 997px;
  height: 271px;
  padding: 49px 0 0 2px;
  border-top: 3px solid #e6e6e6;
}
.tab {
  display: flex;
  flex-direction: column;
  align-items: center;
  color: #757575;
  font-size: 28px;
  line-height: 40px;
}
.tab span {
  margin-top: 20px;
  transform: scaleX(1.24);
}
.tab .label-booking {
  transform: scaleX(1.28);
}
.tab .label-qr {
  transform: scaleX(1.16);
}
.tab.active {
  color: #d93732;
}
.tab-qr {
  margin-top: -2px;
}
```
